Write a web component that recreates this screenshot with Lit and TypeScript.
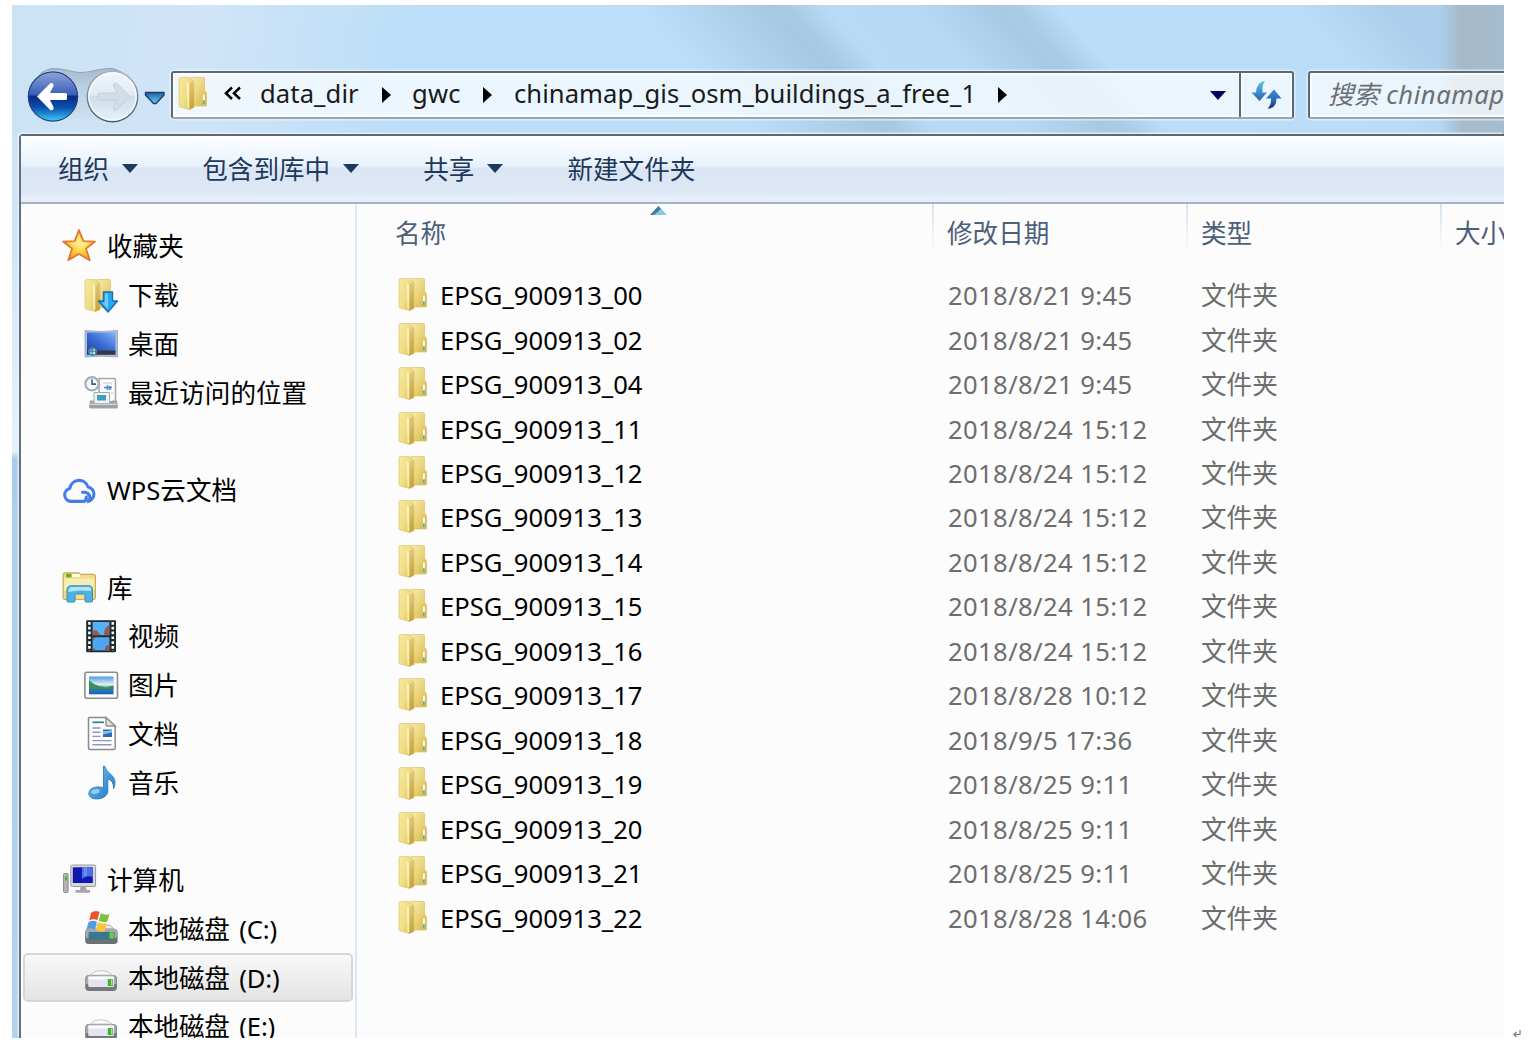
import { LitElement, html, css, svg, nothing } from "lit";
import { customElement, property } from "lit/decorators.js";

const folderIcon = () => svg`
  <path d="M13 2.5 Q13 1.5 14 1.5 H25.5 Q26.5 1.5 26.5 2.5 V14 L28.6 17 V29 Q28.6 30 27.5 30 H13 Z" fill="url(#back)" stroke="#dcc168" stroke-width=".7"/>
  <path d="M1 3 Q1 1.6 2.4 1.6 H12 L16 5.5 V31.5 L11.5 33.5 L2 31 Q1 30.7 1 29.5 Z" fill="url(#front)" stroke="#dcc675" stroke-width=".7"/>
  <path d="M11 7.5 L16 5 V31.3 L11 33.4 Z" fill="url(#spine)"/>
  <path d="M8.7 6 L11.3 8 V32 L9.5 32.5 Z" fill="#fffbd0" opacity=".7"/>
  <rect x="25" y="18.5" width="1.8" height="10" rx=".8" fill="#fff"/><rect x="25" y="24.3" width="1.8" height="4" fill="#4fb0b6"/>`;

const folderDefs = svg`
  <linearGradient id="back" x1="0" x2="1" y1="0" y2="1"><stop offset="0" stop-color="#f6ebb0"/><stop offset=".5" stop-color="#ead57b"/><stop offset="1" stop-color="#d4b03e"/></linearGradient>
  <linearGradient id="front" x1="0" x2="1" y1="0" y2=".6"><stop offset="0" stop-color="#f8eb9f"/><stop offset=".6" stop-color="#efdd84"/><stop offset="1" stop-color="#d8bb58"/></linearGradient>
  <linearGradient id="spine" x1="0" x2="0" y1="0" y2="1"><stop offset="0" stop-color="#e2c878"/><stop offset="1" stop-color="#c9a136"/></linearGradient>`;

const drive = svg`
  <path d="M6 15 L11 11.5 Q17 10 23 11.5 L28 15 Z" fill="#fafafa" stroke="#c6c6c8" stroke-width="1"/>
  <rect x="1.2" y="15" width="31.8" height="16" rx="4" fill="#77777c"/>
  <path d="M1.8 19 Q2 15 6 15 H28 Q32 15 32.4 19 V24 H1.8Z" fill="#a9a9ad"/>
  <rect x="4.2" y="16.5" width="25.8" height="10.5" rx="1.5" fill="#e4e4ee"/>
  <rect x="4.2" y="16.5" width="25.8" height="3" rx="1" fill="#fbfbfd"/>
  <rect x="23.8" y="19" width="5" height="7" fill="#47ae34"/><rect x="27" y="19.6" width="1.2" height="5.5" fill="#a9ea7a"/>`;

const ICONS: Record<string, unknown> = {
  folder: folderIcon(),
  star: svg`
    <defs><radialGradient id="s" cx=".55" cy=".5" r=".55"><stop offset="0" stop-color="#fff27a"/><stop offset=".55" stop-color="#fdc63a"/><stop offset="1" stop-color="#f08f2e"/></radialGradient></defs>
    <path d="M17 1 L21.4 12 L33 12.5 L24 19.7 L27.8 31.2 L17 25 L6.2 31.2 L10 19.7 L1 12.5 L12.6 12 Z" fill="url(#s)" stroke="#dd7630" stroke-width="1.7" stroke-linejoin="round"/>
    <path d="M17 5 L20.2 13.5 L28.5 14.2 L22 16.5 L13 17 L5.8 14.2 L13.8 13.5 Z" fill="#ffe9a0" opacity=".75"/>`,
  download: svg`${folderIcon()}
    <path d="M19.5 14 H28.5 V23 H33.5 L24 34 L14.5 23 H19.5 Z" fill="#2aa6f2" stroke="#1470ae" stroke-width="1.4" stroke-linejoin="round"/>
    <path d="M21 15.5 H24 V31 L18 24.5 H21Z" fill="#6fcbff"/>`,
  desktop: svg`
    <defs><linearGradient id="d" x1="0" y1="1" x2="1" y2="0"><stop offset="0" stop-color="#1d4398"/><stop offset=".5" stop-color="#3c70d8"/><stop offset="1" stop-color="#7fb4f5"/></linearGradient></defs>
    <path d="M1 4.5 Q17 6.5 33.5 4.5 V31 Q17 29.5 1 31Z" fill="#aebdd2" stroke="#93a5bd" stroke-width=".8"/>
    <rect x="3" y="6.5" width="28.5" height="19.5" fill="url(#d)"/>
    <rect x="3" y="24.5" width="28.5" height="4.3" fill="#34383f"/>
    <circle cx="8.5" cy="25.5" r="4.6" fill="#2e86dc"/><path d="M6 23 h2.2 v2.2 H6z" fill="#f0643b"/><path d="M8.9 23 h2.2 v2.2 H8.9z" fill="#9ade4e"/><path d="M6 25.9 h2.2 v2.2 H6z" fill="#71cbff"/><path d="M8.9 25.9 h2.2 v2.2 H8.9z" fill="#ffe05a"/>`,
  recent: svg`
    <path d="M15 3.5 H30.5 Q31.5 3.5 31.5 5 V27 H15Z" fill="#fbfbfb" stroke="#a4a8ac" stroke-width="1.5"/>
    <path d="M19 8 H28 M27 18 H29" stroke="#c2c7cf" stroke-width="1.2"/>
    <path d="M20 12.5 h8 M23.5 10.3 v4.6 M26 11 v4" stroke="#428ad6" stroke-width="1.6"/>
    <path d="M10 17.5 H25.5 V29 H10Z" fill="#f0f4f6" stroke="#a4a8ac"/><rect x="13" y="20" width="9" height="5.5" fill="#3a9fc0"/>
    <path d="M6 25.5 H9.5 L11 28 H25 L28 25.5 H33 L34 31.5 Q34 33.5 32.5 33.5 H6.5 Q5 33.5 5 31.5Z" fill="#9fa1a5"/>
    <path d="M6 29.3 H33" stroke="#d4d5d8" stroke-width="1.4"/>
    <circle cx="8" cy="8.8" r="6.6" fill="#f6f9fb" stroke="#a9aeb4" stroke-width="2.2"/>
    <path d="M8 4.3 V9.1 H12" fill="none" stroke="#3f6078" stroke-width="1.6"/>`,
  cloud: svg`
    <path d="M22 28.4 H8.5 A6.6 6.6 0 0 1 7.9 15.4 A9.3 9.3 0 0 1 26 13.9 A7.4 7.4 0 0 1 26 28.4 Q29 26.5 27.5 22.5 Q25.5 18.6 20.5 19.3 M22 28.4 Q24.7 26.5 24.3 24" fill="none" stroke="#437ee8" stroke-width="3.1" stroke-linecap="round" stroke-linejoin="round"/>`,
  library: svg`
    <path d="M1.2 5 Q1.2 2.8 3.2 2.8 H16 Q17.5 2.8 18.5 4.3 H31 Q33.4 4.3 33.4 6.5 V27 Q33.4 29.5 31 29.5 H3.5 Q1.2 29.5 1.2 27.3Z" fill="#efdd8b" stroke="#c8ac52" stroke-width="1.2"/>
    <rect x="4" y="3.8" width="5.5" height="3.6" rx="1" fill="#62b52e"/><rect x="10" y="4" width="8" height="3" rx="1" fill="#fdfdf2"/>
    <path d="M2.2 8.5 H32.4 V20 Q17 17 2.2 21Z" fill="#faf1b9" opacity=".8"/>
    <path d="M5 31 V20 Q5 15.8 9 15.8 H27 Q30.5 15.8 30.5 20 V31 Q30.5 32 29.5 32 H24 Q23 32 23 31 V25.5 Q23 24 21.5 24 H14.5 Q13 24 13 25.5 V31 Q13 32 12 32 H6 Q5 32 5 31Z" fill="#4fb2de" stroke="#2f8fc4" stroke-width="1"/>
    <path d="M6.3 22 Q6.3 17 10 17 H26.5 Q29.2 17 29.2 21 Q17 19.5 6.3 22Z" fill="#b5e4f8"/>`,
  video: svg`
    <rect x="2.2" y="1.2" width="29.8" height="32" rx="1" fill="#1e292c"/>
    <rect x="8.6" y="3" width="16.8" height="13.2" fill="#57b0f2"/><rect x="8.6" y="18.2" width="16.8" height="13.2" fill="#4ba7ef"/>
    <path d="M8.6 12 L12 11 L17 16.2 H8.6Z M25.4 6 Q20 8 20 16.2 H25.4Z" fill="#96584f"/>
    <path d="M25.4 25 L21 28 V31.4 H25.4Z M8.6 18.2 H12 L8.6 22Z M8.6 28 L12 31.4 H8.6Z" fill="#8c5a52"/>
    <path d="M5.4 3 V32 M28.8 3 V32" stroke="#f4fbfb" stroke-width="2.6" stroke-dasharray="2.7 2.1"/>`,
  picture: svg`
    <defs><linearGradient id="p" x1="0" y1="0" x2="0" y2="1"><stop offset="0" stop-color="#4d9bea"/><stop offset=".45" stop-color="#dff2ee"/><stop offset=".56" stop-color="#8cc6b0"/><stop offset=".7" stop-color="#2c7a5c"/><stop offset=".78" stop-color="#2679c2"/><stop offset="1" stop-color="#1b5fae"/></linearGradient></defs>
    <rect x=".9" y="4.3" width="32.6" height="26" rx="2" fill="#fdfdfd" stroke="#8d8d8d" stroke-width="1.6"/>
    <rect x="5" y="8.5" width="24.5" height="17.8" fill="url(#p)"/>
    <path d="M5 12.5 Q9 16 15 18 L22 19.5 Q27 18 29.5 17.5 V21 H5Z" fill="#3b8d5c"/>`,
  document: svg`
    <path d="M5.5 1.5 H22 L31.2 10 V32 Q31.2 33.5 29.7 33.5 H6 Q4.5 33.5 4.5 32 V2.5 Q4.5 1.5 5.5 1.5Z" fill="#fdfdfe" stroke="#8c8c8c" stroke-width="1.5"/>
    <path d="M22 1.5 V9 Q22 10 23 10 H31.2Z" fill="#e2e2e2" stroke="#8c8c8c" stroke-width="1.3"/>
    <path d="M8.5 6.3 H20" stroke="#2f7f92" stroke-width="1.7"/>
    <path d="M8.5 12 H16.5 M8.5 16.2 H16.5 M8.5 20.4 H16.5 M8.5 24.6 H27.5 M8.5 28.8 H27.5" stroke="#8e93bd" stroke-width="1.4"/>
    <rect x="19" y="13.5" width="9" height="7.5" fill="#2f6ab0"/><path d="M19 15 h5 l4 -1.5 v3 l-9 2z" fill="#74c0ee"/>`,
  music: svg`
    <defs><linearGradient id="m" x1="0" y1="0" x2="1" y2="1"><stop offset="0" stop-color="#7bc8f5"/><stop offset="1" stop-color="#1873c0"/></linearGradient></defs>
    <path d="M20.5 1 Q22 6 27 9.5 Q33.5 15 29.5 24 Q30 15.5 23.8 14 V26.5 Q23 33 13.5 34 Q5.5 34 4.8 29 Q4.8 23 12.5 22 Q17 21.5 19.5 23 V1Z" fill="url(#m)" stroke="#2b80b8" stroke-width=".9"/>
    <ellipse cx="11.5" cy="26.5" rx="4.3" ry="2.3" fill="#b5e3fb" opacity=".7" transform="rotate(-15 11.5 26.5)"/>`,
  computer: svg`
    <rect x="1.5" y="10.5" width="4.6" height="19" rx="1" fill="#b4b4b8" stroke="#8d8d92"/><rect x="3" y="13.5" width="2" height="4" fill="#4caf3b"/>
    <rect x="8.8" y="2" width="24.8" height="21.5" rx="1.5" fill="#d7d7da" stroke="#9b9b9f"/>
    <rect x="10.8" y="4.3" width="20" height="15.7" fill="#0f18b0"/><path d="M20 4.3 H30.8 V14 Q24 12 20 16Z" fill="#4a72e2"/><path d="M22 4.3 H25 V12 L22 14Z" fill="#7fa4f5" opacity=".6"/>
    <path d="M18.5 23.5 H24 L24.5 27 H28 V29.8 H13.5 V27 H18Z" fill="#a5a5aa"/>`,
  system: svg`
    <path d="M5 18 L10 14 H26 L30 18Z" fill="#e5e7ea" stroke="#b3b3b8"/>
    <rect x="1.2" y="18" width="32.4" height="15" rx="3.5" fill="#6d7074"/>
    <rect x="1.8" y="17.5" width="31.2" height="10" rx="3" fill="#a5a8ac"/>
    <rect x="4.5" y="21" width="26" height="7.5" rx="1" fill="#36788f"/><rect x="25.5" y="21.3" width="4.2" height="6.2" fill="#6ad33c"/>
    <path d="M7 2 Q11 -1.5 15.5 1 L13.5 9 Q9 7.3 5.2 9.5Z" fill="#e9552f"/>
    <path d="M16.8 2 Q21 5 25.5 3 L23.3 10.5 Q19 12 14.8 9.8Z" fill="#7cc142"/>
    <path d="M4.6 11 Q9 8.8 13 10.8 L11 18.5 Q6.5 16.5 2.4 18.5Z" fill="#4f9ee2"/>
    <path d="M14.5 11.3 Q19 13.5 22.8 12 L20.8 20 Q16.5 21.5 12 19.2Z" fill="#fac535"/>`,
  drive,
};

@customElement("shell-icon")
class ShellIcon extends LitElement {
  @property() name = "folder";
  static styles = css`
    :host { display: block; width: 35px; height: 35px; flex: none; }
    svg { display: block; width: 35px; height: 35px; overflow: visible; }
  `;
  render() {
    return html`<svg viewBox="0 0 35 35"><defs>${folderDefs}</defs>${ICONS[this.name]}</svg>`;
  }
}

interface NavItem { label: string; icon: string; root?: boolean; selected?: boolean; drive?: boolean; }

const NAV: (NavItem | null)[] = [
  { label: "收藏夹", icon: "star", root: true },
  { label: "下载", icon: "download" },
  { label: "桌面", icon: "desktop" },
  { label: "最近访问的位置", icon: "recent" },
  null,
  { label: "WPS云文档", icon: "cloud", root: true },
  null,
  { label: "库", icon: "library", root: true },
  { label: "视频", icon: "video" },
  { label: "图片", icon: "picture" },
  { label: "文档", icon: "document" },
  { label: "音乐", icon: "music" },
  null,
  { label: "计算机", icon: "computer", root: true },
  { label: "本地磁盘 (C:)", icon: "system", drive: true },
  { label: "本地磁盘 (D:)", icon: "drive", selected: true, drive: true },
  { label: "本地磁盘 (E:)", icon: "drive", drive: true },
];

const FILES: [string, string][] = [
  ["00", "2018/8/21 9:45"], ["02", "2018/8/21 9:45"], ["04", "2018/8/21 9:45"],
  ["11", "2018/8/24 15:12"], ["12", "2018/8/24 15:12"], ["13", "2018/8/24 15:12"],
  ["14", "2018/8/24 15:12"], ["15", "2018/8/24 15:12"], ["16", "2018/8/24 15:12"],
  ["17", "2018/8/28 10:12"], ["18", "2018/9/5 17:36"], ["19", "2018/8/25 9:11"],
  ["20", "2018/8/25 9:11"], ["21", "2018/8/25 9:11"], ["22", "2018/8/28 14:06"],
];

const navButtons = svg`
  <defs>
    <linearGradient id="pod" x1="0" y1="0" x2="0" y2="1"><stop offset="0" stop-color="#9fb3c6"/><stop offset=".4" stop-color="#b9cee0"/><stop offset="1" stop-color="#cfe2f3"/></linearGradient>
    <linearGradient id="edge" x1="0" y1="0" x2="0" y2="1"><stop offset="0" stop-color="#7c8fa2"/><stop offset=".6" stop-color="#9db1c4"/><stop offset="1" stop-color="#dcebf8"/></linearGradient>
    <linearGradient id="bk" x1="0" y1="0" x2="0" y2="1"><stop offset="0" stop-color="#8fa6dc"/><stop offset=".46" stop-color="#3a60b6"/><stop offset=".5" stop-color="#0a2a85"/><stop offset=".72" stop-color="#0c50ae"/><stop offset="1" stop-color="#3fd3fb"/></linearGradient>
    <linearGradient id="fw" x1="0" y1="0" x2="0" y2="1"><stop offset="0" stop-color="#f1f6fa"/><stop offset=".47" stop-color="#e2ebf3"/><stop offset=".5" stop-color="#cfdde9"/><stop offset="1" stop-color="#e6f1fa"/></linearGradient>
    <linearGradient id="ring" x1="0" y1="0" x2="0" y2="1"><stop offset="0" stop-color="#a5b2c0"/><stop offset="1" stop-color="#4b5764"/></linearGradient>
    <linearGradient id="tri" x1="0" y1="0" x2="0" y2="1"><stop offset="0" stop-color="#1c5fa0"/><stop offset="1" stop-color="#5fd3f6"/></linearGradient>
  </defs>
  <path d="M30 1.5 C44 1.5 50 5.5 59 5.5 C68 5.5 76 1.5 90 1.5 A27.5 27.5 0 0 1 90 55.5 C76 55.5 68 52 59 52 C50 52 45 55.5 30 55.5 A27.5 27.5 0 0 1 30 1.5Z" fill="url(#pod)" opacity=".8" stroke="url(#edge)" stroke-width="1"/>
  <circle cx="31" cy="29.5" r="25.3" fill="url(#bk)" stroke="#dce9f6" stroke-width="1"/>
  <circle cx="31" cy="29.5" r="24.6" fill="none" stroke="#25417f" stroke-width="1.2"/>
  <path d="M15 29.5 L28.5 16 Q32 15.5 31.5 19 L28 26 H43.5 Q45 26 45 27.5 V31.5 Q45 33 43.5 33 H28 L31.5 40 Q32 44 28.5 43.2Z" fill="#fff"/>
  <circle cx="90.5" cy="29.5" r="25.2" fill="url(#fw)" stroke="url(#ring)" stroke-width="1.5"/>
  <circle cx="90.5" cy="29.5" r="23.6" fill="none" stroke="#fff" stroke-width="1.4" opacity=".75"/>
  <path d="M108 29.5 L94.5 16 Q91 15.5 91.5 19 L95 26 H77.5 Q76 26 76 27.5 V31.5 Q76 33 77.5 33 H95 L91.5 40 Q91 44 94.5 43.2Z" fill="#d2dde6" stroke="#bdcbd6" stroke-width=".8"/>
  <path d="M123.5 25.5 H142 V28 L134 36.5 H131.5 L123.5 28Z" fill="url(#tri)" stroke="#1d3c66" stroke-width="1.4" stroke-linejoin="round"/>`;

@customElement("app-root")
class AppRoot extends LitElement {
  static styles = css`
    :host {
      display: block; box-sizing: border-box; width: 1531px; height: 1045px; overflow: hidden;
      background: #fff; padding: 5px 0 0 12px; position: relative;
      font: 25.6px/36px "Noto Sans", "Noto Sans CJK SC", sans-serif; color: #000; white-space: nowrap;
    }
    .window {
      box-sizing: border-box; width: 1492px; height: 1033px; overflow: hidden; display: flex; flex-direction: column;
      background:
        linear-gradient(90deg, transparent 1428px, rgba(160,172,180,.62) 1450px, rgba(160,174,184,.55)) 0 0 / 100% 130px no-repeat,
        linear-gradient(48deg, transparent 1040px, rgba(130,165,195,.25) 1110px) 0 0 / 100% 130px no-repeat,
        linear-gradient(48deg, transparent 555px, rgba(135,168,192,.4) 650px, rgba(135,168,192,.36) 662px, rgba(130,165,190,.05) 690px, rgba(130,165,190,.07) 755px, rgba(135,168,192,.36) 815px, rgba(135,168,192,.33) 832px, transparent 862px) 0 0 / 100% 130px no-repeat,
        linear-gradient(100deg, #cce2f5 0, #cfe4f7 200px, #bcdef8 400px, #badcf7) 0 0 / 100% 130px no-repeat,
        linear-gradient(#cfe3f5 0, #cfe3f5 200px, #e6f1fa 446px, #a9cdec 454px, #b4d3ee);
    }
    .glass { height: 129px; flex: none; display: flex; align-items: flex-start; padding-top: 66px; box-sizing: border-box; }
    .travel { width: 147px; height: 58px; margin: -4px 2px 0 10px; flex: none; }
    .field {
      box-sizing: border-box; height: 48px; display: flex; align-items: center; border: 2px solid #5b6a78;
      border-bottom-color: #98a7b4; border-radius: 3px; background: rgba(248,252,255,.78);
      box-shadow: 0 0 0 1.5px rgba(235,246,255,.65), inset 0 0 0 2px rgba(255,255,255,.85);
    }
    .address { width: 1123px; flex: none; }
    .address shell-icon { margin-left: 5px; margin-top: -3px; }
    .crumb { color: #1a1a1a; margin-top: -3px; }
    .chev { width: 18px; height: 15px; margin: -3px 18px 0 11px; flex: none; }
    .sep { width: 9px; height: 16px; flex: none; }
    .s1 { margin: 0 21px 0 24px; } .s2 { margin: 0 22px 0 23px; } .s3 { margin-left: 24px; }
    .data { width: 98px; letter-spacing: .1px; } .gwc { width: 48px; letter-spacing: .2px; } .long { width: 460px; letter-spacing: .03px; }
    .drop { width: 16px; height: 9px; margin-left: auto; margin-right: 13px; flex: none; }
    .refresh { width: 51px; height: 44px; border-left: 2px solid #5b6a78; flex: none; box-sizing: content-box; box-shadow: inset 2px 0 rgba(255,255,255,.7); }
    .search { width: 240px; margin-left: 14px; padding-left: 18px; font-style: italic; color: #6b6f73; flex: none; }
    .search .latin { letter-spacing: .55px; margin-left: 7px; }
    .frame {
      flex: 1; min-height: 0; margin-left: 7px; border-left: 2px solid #63717f; border-top: 2px solid #5c6a78;
      border-radius: 4px 0 0 0; box-shadow: -1.5px -1.5px 0 rgba(235,246,255,.75); background: #fcfcfc;
      display: flex; flex-direction: column;
    }
    .commands {
      height: 68px; flex: none; box-sizing: border-box; display: flex; align-items: center; padding: 2px 0 0 37px; color: #1e395b;
      background: linear-gradient(#fff 0, #f7fbff 8px, #e9f3fd 28px, #e4eefa 31px, #dbe5f3 32px, #dde7f5 56px, #e6effa 62px);
      border-bottom: 2px solid #a3b3c9;
    }
    .cmd { display: flex; align-items: center; }
    .tri { width: 16px; height: 9px; margin: -3px 0 0 13px; }
    .c2 { margin-left: 64px; } .c3 { margin-left: 64px; } .c4 { margin-left: 64px; }
    .body { flex: 1; min-height: 0; display: flex; }
    .nav { width: 334px; flex: none; border-right: 2px solid #dbe8f5; padding-top: 18px; overflow: hidden; }
    .item {
      height: 48.75px; box-sizing: border-box; margin: 0 2px; padding-left: 59px; display: flex; align-items: center;
      border: 2px solid transparent; border-radius: 5px;
    }
    .item.root { padding-left: 37px; }
    .item shell-icon { margin-right: 9px; }
    .item .label { margin-top: 2px; }
    .item.root .label { margin-left: 1px; }
    .item.selected { border-color: #d6d6d6; background: linear-gradient(#f8f8f8, #e4e4e4); background-clip: padding-box; }
    .drv { letter-spacing: -.15px; word-spacing: 3px; }
    .list { flex: 1; min-width: 0; overflow: hidden; }
    .row { display: grid; grid-template-columns: 577px 254px 254px 200px; }
    .head { height: 70px; color: #4c607a; }
    .head span { height: 48px; box-sizing: border-box; padding: 12px 0 0 13px; border-right: 2px solid; border-image: linear-gradient(#d5e4f2, #fcfcfc) 1; }
    .head span:first-child { padding-left: 38px; display: flex; }
    .sort { width: 17px; height: 9px; margin: -10px 0 0 204px; }
    .file { height: 44.46px; align-items: center; color: #6d6d6d; }
    .name { display: flex; align-items: center; padding-left: 41px; color: #000; }
    .name shell-icon { margin: -3px 7px 0 0; }
    .file .t { padding-left: 13px; }
    .file .date { padding-left: 14px; letter-spacing: .4px; }
    .name .n { letter-spacing: .02px; }
    .return { position: absolute; left: 1513px; top: 1029px; width: 8px; height: 9px; }
  `;

  private tri() {
    return html`<svg class="tri" viewBox="0 0 16 9"><path d="M0 0H16L8 9Z" fill="#1e395b"/></svg>`;
  }
  private sep(cls: string) {
    return html`<svg class="sep ${cls}" viewBox="0 0 9 16"><path d="M0 0L9 8L0 16Z" fill="#000"/></svg>`;
  }

  render() {
    return html`
      <div class="window">
        <div class="glass">
          <svg class="travel" viewBox="0 0 147 58">${navButtons}</svg>
          <div class="field address">
            <shell-icon name="folder"></shell-icon>
            <svg class="chev" viewBox="0 0 18 15"><path d="M8 1.5L2 7.2L8 13M16 1.5L10 7.2L16 13" fill="none" stroke="#000" stroke-width="2.5"/></svg>
            <span class="crumb data">data_dir</span>${this.sep("s1")}
            <span class="crumb gwc">gwc</span>${this.sep("s2")}
            <span class="crumb long">chinamap_gis_osm_buildings_a_free_1</span>${this.sep("s3")}
            <svg class="drop" viewBox="0 0 16 9"><path d="M0 0H16L8 9Z" fill="#03045e"/></svg>
            <svg class="refresh" viewBox="0 0 51 44">
              <defs><linearGradient id="r1" x1="0" y1="0" x2="0" y2="1"><stop offset="0" stop-color="#56c5e4"/><stop offset="1" stop-color="#2a62b8"/></linearGradient>
              <linearGradient id="r2" x1="0" y1="0" x2="0" y2="1"><stop offset="0" stop-color="#3b8ad4"/><stop offset=".6" stop-color="#2c66b4"/><stop offset="1" stop-color="#14296f"/></linearGradient></defs>
              <path d="M24 8 Q15.5 9 15 19.5 H10.5 L18.5 28 L26 19.5 H21.5 Q20.5 13 24 8Z" fill="url(#r1)"/>
              <path d="M26.5 35.5 Q35.5 35.5 35.5 25.5 H40.5 L33 16.5 L25 25.5 H30 Q30.5 32 26.5 35.5Z" fill="url(#r2)"/>
            </svg>
          </div>
          <div class="field search">搜索<span class="latin">chinamap</span></div>
        </div>
        <div class="frame">
          <div class="commands">
            <span class="cmd">组织${this.tri()}</span>
            <span class="cmd c2">包含到库中${this.tri()}</span>
            <span class="cmd c3">共享${this.tri()}</span>
            <span class="cmd c4">新建文件夹</span>
          </div>
          <div class="body">
            <div class="nav">
              ${NAV.map((n) => n
                ? html`<div class="item ${n.root ? "root" : ""} ${n.selected ? "selected" : ""}">
                    <shell-icon name=${n.icon}></shell-icon><span class="label ${n.drive ? "drv" : ""}">${n.label}</span></div>`
                : html`<div class="item">${nothing}</div>`)}
            </div>
            <div class="list">
              <div class="row head">
                <span>名称<svg class="sort" viewBox="0 0 17 9"><path d="M0 9L8.5 0L17 9Z" fill="#8cc8de"/><path d="M0 9L8.5 0L11 3L4 9Z" fill="#417d9c"/></svg></span>
                <span>修改日期</span><span>类型</span><span>大小</span>
              </div>
              ${FILES.map(([n, d]) => html`
                <div class="row file">
                  <div class="name"><shell-icon name="folder"></shell-icon><span class="n">EPSG_900913_${n}</span></div>
                  <span class="t date">${d}</span><span class="t">文件夹</span>
                </div>`)}
            </div>
          </div>
        </div>
      </div>
      <svg class="return" viewBox="0 0 8 9"><path d="M7 1V5.5H1M3.5 3L1 5.5L3.5 8" fill="none" stroke="#777" stroke-width="1.2"/></svg>
    `;
  }
}
